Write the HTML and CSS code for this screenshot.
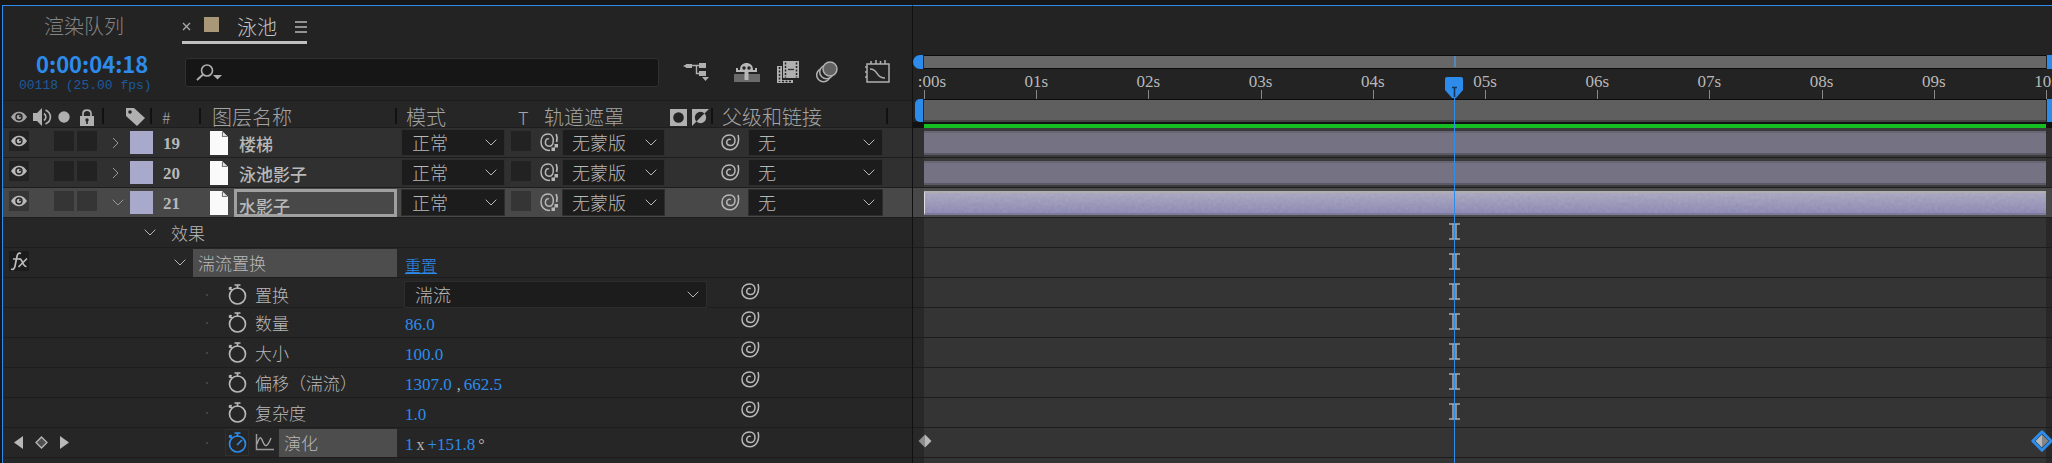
FILE: index.html
```html
<!DOCTYPE html>
<html lang="zh-CN">
<head>
<meta charset="utf-8">
<title>泳池</title>
<link rel="stylesheet" href="styles.css">
</head>
<body>
<svg class="defs" aria-hidden="true">
  <symbol id="eye" viewBox="0 0 16 12"><path d="M0 6C3 1.6 5.500 .8 8 .8S13 1.600 16 6C13 10.400 10.500 11.200 8 11.200S3 10.400 0 6Z" fill="currentColor"/><circle cx="8" cy="6" r="3.700" fill="#242424"/><circle cx="8" cy="6" r="2.300" fill="currentColor"/><circle cx="9" cy="5.300" r="1" fill="#242424"/></symbol>
  <symbol id="right" viewBox="0 0 7 12"><path d="M1 1l5 5-5 5" fill="none" stroke="currentColor" stroke-width="1"/></symbol>
  <symbol id="down" viewBox="0 0 12 7"><path d="M.7.7L6 6 11.300.7" fill="none" stroke="currentColor" stroke-width="1"/></symbol>
  <symbol id="doc" viewBox="0 0 18 24"><path d="M0 0h12l6 6v18H0z" fill="#fafafa"/><path d="M12.500 1v4.500H17" fill="none" stroke="#777" stroke-width="1.200"/><path d="M13.500 1.500L17 5H13.500z" fill="#ddd"/></symbol>
  <symbol id="spiral" viewBox="0 0 19 17"><path d="M17 1C19.200 9 15 15.700 9 15.700C4 15.700 1 12.500 1 8.500C1 4 4 1 8.500 1C12 1 14 3.500 14 6.500C14 9.500 12 11.500 9.500 11.500C7 11.500 5.500 10.200 5.700 8.200C6 6 8 4.700 9.800 5.600" fill="none" stroke="currentColor" stroke-width="1.500"/></symbol>
  <symbol id="matte" viewBox="0 0 19 19"><path d="M10 17.300C4 18 1 13.500 1 9C1 4 4 1 8 1C11.500 1 13.300 4 13.300 7.500C13.300 11 11.500 13.300 9 13.300C6.500 13.300 5.200 11.500 5.400 9C5.600 6.500 7.500 5 9 6" fill="none" stroke="currentColor" stroke-width="1.500"/><path d="M16.200 1C17.300 3.500 17.300 6 16.600 9" fill="none" stroke="currentColor" stroke-width="1.700"/><path d="M14.500 11h3.500v3.500h-3.500zM11.500 14.500h3.500v3.500h-3.500z" fill="currentColor"/></symbol>
  <symbol id="watch" viewBox="0 0 19 21"><circle cx="9.500" cy="12" r="8" fill="none" stroke="currentColor" stroke-width="1.700"/><path d="M6.500 1h6M9.500 1v3.500M1 3.500l3 2.500M1 5.500l2.500-2.500" stroke="currentColor" stroke-width="1.700" fill="none"/></symbol>
  <symbol id="ibeam" viewBox="0 0 11 17"><path d="M0 1h11M0 16h11M4 1v15M7 1v15" stroke="#aaa" stroke-width="1.500" fill="none"/></symbol>
</svg>

<main class="app">
  <section class="outline">
    <nav class="tabs">
      <button class="tab">渲染队列</button>
      <div class="tab-active">
        <button class="icon-btn" aria-label="关闭"><svg width="9" height="9" viewBox="0 0 9 9"><path d="M1 1l7 7M8 1L1 8" stroke="#aaa" stroke-width="1.300"/></svg></button>
        <i class="comp-color"></i>
        <button class="tab current">泳池</button>
        <button class="icon-btn" aria-label="菜单"><svg width="12" height="12" viewBox="0 0 12 12"><path d="M0 1h12M0 6h12M0 11h12" stroke="#b8b8b8" stroke-width="1.400"/></svg></button>
      </div>
    </nav>

    <div class="tools">
      <div class="time">
        <button class="timecode">0:00:04:18</button>
        <span class="frames">00118 (25.00 fps)</span>
      </div>
      <label class="search">
        <svg width="26" height="17" viewBox="0 0 26 17"><circle cx="11" cy="6.500" r="5.500" fill="none" stroke="#b0b0b0" stroke-width="1.600"/><path d="M7 10.500L1 16" stroke="#b0b0b0" stroke-width="1.800"/><path d="M17 11h9l-4.500 4.500z" fill="#b0b0b0"/></svg>
        <input type="text" aria-label="搜索">
      </label>
      <div class="tool-icons">
        <button class="icon-btn" aria-label="合成流程图"><svg width="26" height="20" viewBox="0 0 26 20"><path d="M0 4l4-2v4zM3 2h6v4H3zM16 1h7v5h-7zM16 9h7v5h-7zM19 15h7l-3.500 4z" fill="#b0b0b0"/><path d="M8 3.500h8M13.500 3.500v8H17" fill="none" stroke="#b0b0b0" stroke-width="1.400"/></svg></button>
        <button class="icon-btn" aria-label="隐藏图层"><svg width="26" height="20" viewBox="0 0 26 20"><path d="M0 12h26v8H0z" fill="#6a6a6a"/><path d="M6 8C6 3 9 1 12.500 1S19 3 19 8h2V6h2v4H2V6h2v2zM10.500 8h4v10h-4z" fill="#b8b8b8"/><path d="M3 10v-3M22 10V7" stroke="#b8b8b8"/><circle cx="10" cy="6" r="1.700" fill="#242424"/><circle cx="15" cy="6" r="1.700" fill="#242424"/></svg></button>
        <button class="icon-btn" aria-label="帧混合"><svg width="22" height="22" viewBox="0 0 22 22"><path d="M0 5h5v14h11v3H0zM6 0h16v17H6z" fill="#b0b0b0"/><path d="M8.500 1.500v15M19.500 1.500v15M2.500 6v15M5 20.500h10" stroke="#242424" stroke-width="1.500" stroke-dasharray="2 1.500"/><path d="M11 8.500h6" stroke="#333" stroke-width="1.300"/></svg></button>
        <button class="icon-btn" aria-label="运动模糊"><svg width="22" height="22" viewBox="0 0 22 22"><g fill="#242424" stroke="#b0b0b0" stroke-width="1.500"><circle cx="7.500" cy="14" r="6.800"/><circle cx="10.500" cy="11" r="6.800"/><circle cx="14" cy="8" r="7" fill="#626262"/></g></svg></button>
        <button class="icon-btn graph" aria-label="图表编辑器"><svg width="25" height="24" viewBox="0 0 25 24"><path d="M2 4h22v18H2zM6 1v3M11 0v4M15.500 1v3M20 0v4M0 7h2M0 12h2M0 17h2" fill="none" stroke="#b0b0b0" stroke-width="1.500"/><path d="M5 9c9 0 5 9 15 9" fill="none" stroke="#b0b0b0" stroke-width="1.500"/></svg></button>
      </div>
    </div>

    <div class="row head">
      <div class="cell av">
        <svg width="16" height="12"><use href="#eye"/></svg>
        <svg width="19" height="18" viewBox="0 0 19 18"><path d="M0 5h4l5-5v18l-5-5H0z" fill="#b0b0b0"/><path d="M11 5.500c2.500 2 2.500 5 0 7M12.500 2c6.500 3 6.500 11 0 14" fill="none" stroke="#b0b0b0" stroke-width="1.700"/></svg>
        <svg width="12" height="12" viewBox="0 0 12 12"><circle cx="6" cy="6" r="5.700" fill="#b0b0b0"/></svg>
        <svg width="14" height="17" viewBox="0 0 14 17"><path d="M0 7h14v10H0z" fill="#b0b0b0"/><path d="M3 8V4.500C3 0 11 0 11 4.500V8" fill="none" stroke="#b0b0b0" stroke-width="1.700"/><circle cx="7" cy="11" r="1.700" fill="#242424"/><path d="M7 11v4" stroke="#242424" stroke-width="1.600"/></svg>
      </div>
      <div class="cell tag"><svg width="19" height="18" viewBox="0 0 19 18"><path d="M0 0h8l11 10-8 8L0 8z" fill="#b0b0b0"/><circle cx="4" cy="4" r="1.800" fill="#242424"/></svg></div>
      <div class="cell hash">#</div>
      <div class="cell name">图层名称</div>
      <div class="cell mode plain">模式</div>
      <div class="cell t plain">T</div>
      <div class="cell track">轨道遮罩
        <span class="matte-icons">
          <svg width="17" height="17" viewBox="0 0 17 17"><path d="M0 0h17v17H0z" fill="#b0b0b0"/><circle cx="8.500" cy="8.500" r="5.300" fill="#242424"/></svg>
          <svg width="17" height="17" viewBox="0 0 17 17"><path d="M0 0h17L0 17z" fill="#b0b0b0"/><path d="M4.500 12.500A5.300 5.300 0 0 1 12.500 4.500z" fill="#242424"/><path d="M4.500 12.500L12.500 4.500A5.300 5.300 0 0 1 4.500 12.500z" fill="#b0b0b0"/></svg>
        </span>
      </div>
      <div class="cell parent">父级和链接</div>
    </div>

    <div class="row layer">
      <div class="cell av"><button class="box eye-box" aria-label="视频"><svg width="16" height="12"><use href="#eye"/></svg></button><button class="box" aria-label="独奏"></button><button class="box" aria-label="锁定"></button></div>
      <div class="cell tag"><svg width="7" height="12"><use href="#right"/></svg><i class="swatch"></i></div>
      <div class="cell num">19</div>
      <div class="cell name"><svg width="18" height="24"><use href="#doc"/></svg><span class="lname">楼梯</span></div>
      <div class="cell mode"><div class="pick"><select aria-label="模式"><option>正常</option></select><svg width="12" height="7"><use href="#down"/></svg></div></div>
      <div class="cell t"><button class="box" aria-label="保留透明度"></button></div>
      <div class="cell track"><svg width="19" height="19"><use href="#matte"/></svg><div class="pick"><select aria-label="轨道遮罩"><option>无蒙版</option></select><svg width="12" height="7"><use href="#down"/></svg></div></div>
      <div class="cell parent"><svg width="19" height="17"><use href="#spiral"/></svg><div class="pick"><select aria-label="父级"><option>无</option></select><svg width="12" height="7"><use href="#down"/></svg></div></div>
    </div>

    <div class="row layer">
      <div class="cell av"><button class="box eye-box" aria-label="视频"><svg width="16" height="12"><use href="#eye"/></svg></button><button class="box" aria-label="独奏"></button><button class="box" aria-label="锁定"></button></div>
      <div class="cell tag"><svg width="7" height="12"><use href="#right"/></svg><i class="swatch"></i></div>
      <div class="cell num">20</div>
      <div class="cell name"><svg width="18" height="24"><use href="#doc"/></svg><span class="lname">泳池影子</span></div>
      <div class="cell mode"><div class="pick"><select aria-label="模式"><option>正常</option></select><svg width="12" height="7"><use href="#down"/></svg></div></div>
      <div class="cell t"><button class="box" aria-label="保留透明度"></button></div>
      <div class="cell track"><svg width="19" height="19"><use href="#matte"/></svg><div class="pick"><select aria-label="轨道遮罩"><option>无蒙版</option></select><svg width="12" height="7"><use href="#down"/></svg></div></div>
      <div class="cell parent"><svg width="19" height="17"><use href="#spiral"/></svg><div class="pick"><select aria-label="父级"><option>无</option></select><svg width="12" height="7"><use href="#down"/></svg></div></div>
    </div>

    <div class="row layer selected">
      <div class="cell av"><button class="box eye-box" aria-label="视频"><svg width="16" height="12"><use href="#eye"/></svg></button><button class="box" aria-label="独奏"></button><button class="box" aria-label="锁定"></button></div>
      <div class="cell tag"><svg width="12" height="7"><use href="#down"/></svg><i class="swatch"></i></div>
      <div class="cell num">21</div>
      <div class="cell name"><svg width="18" height="24"><use href="#doc"/></svg><span class="lname framed">水影子</span></div>
      <div class="cell mode"><div class="pick"><select aria-label="模式"><option>正常</option></select><svg width="12" height="7"><use href="#down"/></svg></div></div>
      <div class="cell t"><button class="box" aria-label="保留透明度"></button></div>
      <div class="cell track"><svg width="19" height="19"><use href="#matte"/></svg><div class="pick"><select aria-label="轨道遮罩"><option>无蒙版</option></select><svg width="12" height="7"><use href="#down"/></svg></div></div>
      <div class="cell parent"><svg width="19" height="17"><use href="#spiral"/></svg><div class="pick"><select aria-label="父级"><option>无</option></select><svg width="12" height="7"><use href="#down"/></svg></div></div>
    </div>

    <div class="row prop">
      <div class="label group"><svg width="12" height="7"><use href="#down"/></svg><span>效果</span></div>
    </div>

    <div class="row prop">
      <div class="label effect"><button class="box fx" aria-label="效果开关"><svg width="18" height="19" viewBox="0 0 18 19"><path d="M11 1.500C8.500.5 7.500 2 7 4.500L5 14C4.500 17 3 18 1 17M3 7h7" fill="none" stroke="#bbb" stroke-width="1.700"/><path d="M9.500 7c3-1 3 8 7 7.500M17 6.500L8.500 15" fill="none" stroke="#bbb" stroke-width="1.700"/></svg></button><svg width="12" height="7"><use href="#down"/></svg><span class="hl">湍流置换</span></div>
      <div class="value"><a class="reset" href="#">重置</a></div>
    </div>

    <div class="row prop">
      <div class="label item"><i class="dot"></i><svg width="19" height="21"><use href="#watch"/></svg><span>置换</span></div>
      <div class="value"><div class="pick"><select aria-label="置换"><option>湍流</option></select><svg width="12" height="7"><use href="#down"/></svg></div></div>
      <div class="link"><svg width="19" height="17"><use href="#spiral"/></svg></div>
    </div>

    <div class="row prop">
      <div class="label item"><i class="dot"></i><svg width="19" height="21"><use href="#watch"/></svg><span>数量</span></div>
      <div class="value"><button class="hot">86.0</button></div>
      <div class="link"><svg width="19" height="17"><use href="#spiral"/></svg></div>
    </div>

    <div class="row prop">
      <div class="label item"><i class="dot"></i><svg width="19" height="21"><use href="#watch"/></svg><span>大小</span></div>
      <div class="value"><button class="hot">100.0</button></div>
      <div class="link"><svg width="19" height="17"><use href="#spiral"/></svg></div>
    </div>

    <div class="row prop">
      <div class="label item"><i class="dot"></i><svg width="19" height="21"><use href="#watch"/></svg><span>偏移（湍流）</span></div>
      <div class="value"><button class="hot">1307.0</button><span class="unit comma">,</span><button class="hot">662.5</button></div>
      <div class="link"><svg width="19" height="17"><use href="#spiral"/></svg></div>
    </div>

    <div class="row prop">
      <div class="label item"><i class="dot"></i><svg width="19" height="21"><use href="#watch"/></svg><span>复杂度</span></div>
      <div class="value"><button class="hot">1.0</button></div>
      <div class="link"><svg width="19" height="17"><use href="#spiral"/></svg></div>
    </div>

    <div class="row prop">
      <div class="label item keyed">
        <div class="keynav">
          <button class="icon-btn" aria-label="上一关键帧"><svg width="9" height="13" viewBox="0 0 9 13"><path d="M9 0v13L0 6.500z" fill="#b8b8b8"/></svg></button>
          <button class="icon-btn" aria-label="关键帧"><svg width="13" height="13" viewBox="0 0 13 13"><path d="M6.500 1L12 6.500 6.500 12 1 6.500z" fill="#505050" stroke="#b8b8b8" stroke-width="1.300"/></svg></button>
          <button class="icon-btn" aria-label="下一关键帧"><svg width="9" height="13" viewBox="0 0 9 13"><path d="M0 0v13l9-6.500z" fill="#b8b8b8"/></svg></button>
        </div>
        <i class="dot"></i>
        <button class="watch-on" aria-label="秒表"><svg width="19" height="21" viewBox="0 0 19 21"><use href="#watch"/><path d="M9 13l5-5" stroke="currentColor" stroke-width="1.700"/></svg></button>
        <svg width="19" height="17" viewBox="0 0 19 17"><path d="M1.500 0v15.500H19" fill="none" stroke="#999" stroke-width="1.500"/><path d="M2 10C5 1 6 3 8 8s4 6 8-4" fill="none" stroke="#aaa" stroke-width="1.300"/></svg>
        <span class="hl">演化</span>
      </div>
      <div class="value"><button class="hot">1</button><span class="unit">x</span><button class="hot">+151.8</button><span class="unit">°</span></div>
      <div class="link"><svg width="19" height="17"><use href="#spiral"/></svg></div>
    </div>
  </section>

  <section class="timeline">
    <div class="navigator"><i class="cap start"></i><div class="nav-bar"><i class="nav-mark"></i></div><i class="cap end"></i></div>
    <div class="ruler">
      <div class="tick first"><span>:00s</span></div><div class="tick"><span>01s</span></div><div class="tick"><span>02s</span></div><div class="tick"><span>03s</span></div><div class="tick"><span>04s</span></div><div class="tick"><span>05s</span></div><div class="tick"><span>06s</span></div><div class="tick"><span>07s</span></div><div class="tick"><span>08s</span></div><div class="tick"><span>09s</span></div><div class="tick last"><span>10s</span></div>
    </div>
    <div class="work"><i class="cap start"></i><div class="work-bar"></div><i class="cap end"></i></div>
    <div class="cache"><i></i></div>
    <div class="lane layer"><div class="track-area"><i class="clip"></i></div></div>
    <div class="lane layer"><div class="track-area"><i class="clip"></i></div></div>
    <div class="lane layer selected"><div class="track-area"><div class="clip on"><svg width="100%" height="100%"><filter id="grain"><feTurbulence type="fractalNoise" baseFrequency=".3" numOctaves="2"/><feColorMatrix type="saturate" values="0"/></filter><rect width="100%" height="100%" filter="url(#grain)" opacity=".18"/></svg></div></div></div>
    <div class="lane"><div class="track-area"><svg class="ibeam" width="11" height="17"><use href="#ibeam"/></svg></div></div>
    <div class="lane"><div class="track-area"><svg class="ibeam" width="11" height="17"><use href="#ibeam"/></svg></div></div>
    <div class="lane"><div class="track-area"><svg class="ibeam" width="11" height="17"><use href="#ibeam"/></svg></div></div>
    <div class="lane"><div class="track-area"><svg class="ibeam" width="11" height="17"><use href="#ibeam"/></svg></div></div>
    <div class="lane"><div class="track-area"><svg class="ibeam" width="11" height="17"><use href="#ibeam"/></svg></div></div>
    <div class="lane"><div class="track-area"><svg class="ibeam" width="11" height="17"><use href="#ibeam"/></svg></div></div>
    <div class="lane"><div class="track-area"><svg class="ibeam" width="11" height="17"><use href="#ibeam"/></svg></div></div>
    <div class="lane"><div class="track-area">
      <svg class="key key-start" width="22" height="22" viewBox="0 0 22 22"><path d="M11 4.500v13L4.500 11z" fill="#8c8c8c"/><path d="M11 4.500v13l6.500-6.500z" fill="#b8b8b8"/></svg>
      <svg class="key key-end" width="22" height="22" viewBox="0 0 22 22"><path d="M11 1.800l9.200 9.200-9.200 9.200L1.800 11z" fill="#1d3350" stroke="#2d8ceb" stroke-width="3" stroke-linejoin="round"/><path d="M11 4.500v13L4.500 11z" fill="#b8b8b8"/><path d="M11 4.500v13l6.500-6.500z" fill="#858585"/></svg>
    </div></div>
    <div class="lane rest"><div class="track-area"></div></div>
    <div class="overlay"><div class="playhead"><svg width="18" height="21" viewBox="0 0 18 21"><path d="M0 2Q0 0 2 0h14q2 0 2 2v11l-7 8H7L0 13z" fill="#2d8ceb"/><path d="M7 10.500h5M9.500 10v10" stroke="#15345a" stroke-width="1.600"/></svg><i></i></div></div>
  </section>
</main>
</body>
</html>
```

FILE: styles.css
```css
* { box-sizing: border-box; }

body {
  margin: 0;
  background: #161616;
  color: #b8b8b8;
  font-family: "Noto Sans CJK SC", sans-serif;
  font-size: 17px;
  font-weight: 300;
  line-height: 24px;
}

svg { display: block; flex: none; }
i { display: block; flex: none; }
.defs { position: absolute; width: 0; height: 0; }

button, select, input {
  margin: 0;
  padding: 0;
  border: 0;
  background: none;
  color: inherit;
  font: inherit;
}

.icon-btn { display: flex; }

.app {
  display: grid;
  grid-template-columns: 910px minmax(0, 1fr);
  min-height: 100vh;
  padding: 5px 0 0 2px;
}

.outline {
  border-top: 1px solid #2d8ceb;
  border-left: 1px solid #2d8ceb;
  background: #262626;
}

/* Tabs */
.tabs {
  display: flex;
  gap: 58px;
  height: 38px;
  padding-left: 41px;
  background: #232323;
}
.tab { height: 28px; margin-top: 6px; font-size: 20px; line-height: 28px; color: #858585; }
.tab.current { margin: 0 18px; color: #c4c4c4; }
.tab-active {
  display: flex;
  align-items: center;
  border-bottom: 3px solid #c0c0c0;
  padding-top: 6px;
}
.comp-color { width: 15px; height: 15px; margin: 0 0 4px 13px; background: #a89878; }

/* Tool bar */
.tools {
  display: flex;
  align-items: center;
  height: 56px;
  background: #232323;
}
.time { display: flex; flex-direction: column; width: 182px; padding: 4px 0 0 16px; }
.timecode {
  align-self: flex-start;
  padding-left: 17px;
  color: #2d8ceb;
  font-size: 22px;
  font-weight: 700;
  line-height: 24px;
}
.frames { color: #1d5a9c; font-family: "Liberation Mono", monospace; font-size: 13px; line-height: 22px; }
.search {
  display: flex;
  flex: 1;
  align-items: center;
  height: 29px;
  padding-left: 10px;
  border: 1px solid #303030;
  border-radius: 3px;
  background: #161616;
}
.search input { flex: 1; outline: 0; }
.tool-icons { display: flex; align-items: center; gap: 17px; padding: 0 22px 0 24px; }
.tool-icons > :first-child { margin-right: 8px; }
.tool-icons .graph { margin-left: 10px; }

/* Column grid shared by the header and the layers */
.row {
  display: grid;
  grid-template-columns: 101px 48px 49px 196px 111px 27px 178px 175px;
  height: 30px;
  border-bottom: 1px solid #1d1d1d;
}
.cell { display: flex; align-items: center; min-width: 0; }

.head {
  height: 28px;
  border-top: 1px solid #1d1d1d;
  font-size: 20px;
  line-height: 28px;
  color: #a4a4a4;
}
.head .cell {
  padding-top: 2px;
  background: linear-gradient(#111, #111) right center / 2px 16px no-repeat;
}
.head .plain { background: none; }
.head .av { gap: 6px; padding-left: 8px; }
.head .av svg:last-child { margin-left: 4px; }
.head .tag { padding-left: 22px; }
.head .hash { padding-left: 10px; font-size: 16px; }
.head .name { padding-left: 11px; }
.head .mode { padding-left: 9px; }
.head .t { padding-left: 10px; font-size: 18px; }
.head .track { justify-content: space-between; padding: 2px 4px 0 9px; }
.matte-icons { display: flex; gap: 5px; }
.head .parent { padding-left: 9px; }

.layer { background: #303030; }
.layer.selected { background: #484848; }

.box { width: 20px; height: 20px; background: #222; }
.selected .box { background: #353535; }
.layer .av { align-items: flex-start; gap: 3px; padding: 3px 0 0 6px; }
.eye-box { display: flex; align-items: center; justify-content: center; margin-right: 22px; }
.layer .tag { justify-content: flex-end; gap: 6px; color: #999; }
.layer .tag svg[width="7"] { margin-right: 5px; }
.swatch { width: 23px; height: 23px; margin-right: -1px; background: #a9a9cb; }
.layer .num {
  padding: 3px 0 0 11px;
  font-family: "Liberation Serif", serif;
  font-size: 17px;
  font-weight: 700;
}
.layer .name { gap: 6px; padding-left: 9px; }
.lname { flex: 1; padding: 3px 0 0 5px; font-weight: 500; }
.framed { height: 28px; padding: 0 0 0 2px; border: 3px solid #a0a0a0; line-height: 28px; }

.pick { position: relative; flex: 1; height: 25px; background: #1c1c1c; outline: 1px solid #2d2d2d; }
.pick select {
  width: 100%;
  height: 25px;
  padding-left: 10px;
  appearance: none;
  font-size: 18px;
  line-height: 25px;
}
.pick svg { position: absolute; top: 9px; right: 7px; }
.layer .mode { padding: 0 4px 0 5px; }
.layer .t { align-items: flex-start; padding: 3px 0 0 3px; }
.layer .track { gap: 4px; padding: 0 49px 0 5px; }
.layer .track select { padding-left: 9px; }
.layer .parent { gap: 9px; padding: 0 6px 0 8px; }
.layer .parent select { padding-left: 9px; }

/* Property rows */
.row.prop { grid-template-columns: 394px 337px 1fr; }
.label, .value, .link { display: flex; align-items: center; }
.label.group { gap: 15px; padding-left: 141px; }
.label.effect { padding-left: 6px; }
.fx { display: flex; align-items: center; justify-content: center; margin: 0 145px 3px 0; background: #1b1b1b; }
.hl { flex: 1; height: 28px; padding-left: 5px; background: #4d4d4d; line-height: 28px; }
.effect .hl { margin-left: 7px; }
.dot { width: 2px; height: 2px; background: #444; }
.label.item { padding-left: 203px; }
.item .dot { margin-right: 20px; }
.item > span { margin-left: 8px; }
.item.keyed { padding-left: 11px; }
.keynav { display: flex; align-items: center; gap: 12px; width: 192px; }
.keyed .dot { margin-right: 17px; }
.watch-on {
  display: flex;
  align-items: center;
  justify-content: center;
  width: 24px;
  height: 27px;
  margin-right: 6px;
  border: 1px solid #303030;
  color: #2d8ceb;
}
.keyed > .hl { margin-left: 5px; }
.value { padding: 4px 0 0 8px; font-family: "Liberation Serif", serif; font-size: 17px; line-height: 20px; }
.value .pick { flex: 0 1 301px; margin-bottom: 4px; font-family: "Noto Sans CJK SC", sans-serif; }
.hot { color: #2d8ceb; }
.unit { padding: 0 3px; font-size: 16px; }
.comma { padding-left: 5px; }
.reset { color: #2d8ceb; font-family: "Noto Sans CJK SC", sans-serif; font-size: 16px; }
.link { padding: 0 0 7px 7px; }

/* Timeline */
.timeline {
  position: relative;
  display: flex;
  flex-direction: column;
  overflow: hidden;
  border-top: 1px solid #2d8ceb;
  border-left: 1px solid #111;
  padding-top: 49px;
  background: #232323;
}
.navigator, .work { display: flex; flex: none; }
.navigator { height: 14px; }
.work { height: 23px; }
.cap { background: #2d8ceb; }
.cap.start { width: 10px; margin-right: 1px; border-radius: 7px 0 0 7px; }
.cap.end { width: 5px; margin-left: 1px; }
.work .cap { height: 23px; }
.work .cap.start { width: 8px; margin-left: 2px; border-radius: 5px 0 0 5px; }
.nav-bar { flex: 1; border: solid #0c0c0c; border-width: 1px 0; background: #676767; }
.nav-mark { width: 2px; height: 11px; margin-left: 47.2%; background: #5587b8; }
.work-bar { flex: 1; border-top: 1px solid #0c0c0c; border-bottom: 2px solid #444; background: #5f5f5f; }
.ruler {
  display: flex;
  flex: none;
  height: 30px;
  margin: 0 6px 0 11px;
  font-family: "Liberation Serif", serif;
  font-size: 17px;
  line-height: 16px;
}
.tick { flex: 1 1 0; min-width: 0; padding-top: 5px; background: linear-gradient(#888, #888) left bottom / 1px 9px no-repeat; }
.tick span { display: block; width: 40px; margin-left: -20px; text-align: center; }
.tick.first span { width: 42px; text-align: right; }
.tick.last { flex: 0 0 1px; margin-right: -1px; }
.cache { flex: none; height: 6px; padding: 2px 6px 0 11px; background: #111; }
.cache i { height: 4px; background: #14be23; }

.lane {
  flex: none;
  height: 30px;
  padding: 0 6px 0 11px;
  border-bottom: 1px solid #1d1d1d;
  background: #282828;
}
.lane.rest { flex: 1 0 5px; height: auto; border: 0; }
.track-area { position: relative; height: 100%; background: #343434; }
.lane.layer { background: #303030; }
.lane.layer .track-area { padding-top: 3px; background: #3a3a3a; }
.lane.layer.selected { background: #484848; }
.lane.selected .track-area { background: #4d4d4d; }
.clip {
  height: 24px;
  border-top: 2px solid #686672;
  border-bottom: 2px solid #5a5966;
  background: #757383;
}
.clip.on {
  overflow: hidden;
  border-top-color: #b0aeb0;
  border-bottom-color: #7c7b9c;
  border-left: 1px solid #ddd;
  background: linear-gradient(#a9a6c0, #8a88b4);
}
.ibeam { position: absolute; top: 5px; left: 47.2%; margin-left: -5px; }
.key { position: absolute; top: 2px; }
.key-start { left: -10px; }
.key-end { right: -7px; }

.overlay { position: absolute; top: 71px; bottom: 0; left: 11px; right: 6px; pointer-events: none; }
.playhead { display: flex; flex-direction: column; align-items: center; width: 19px; height: 100%; margin-left: calc(47.2% - 9px); }
.playhead i { flex: 1; width: 1px; background: #2d8ceb; }
```
